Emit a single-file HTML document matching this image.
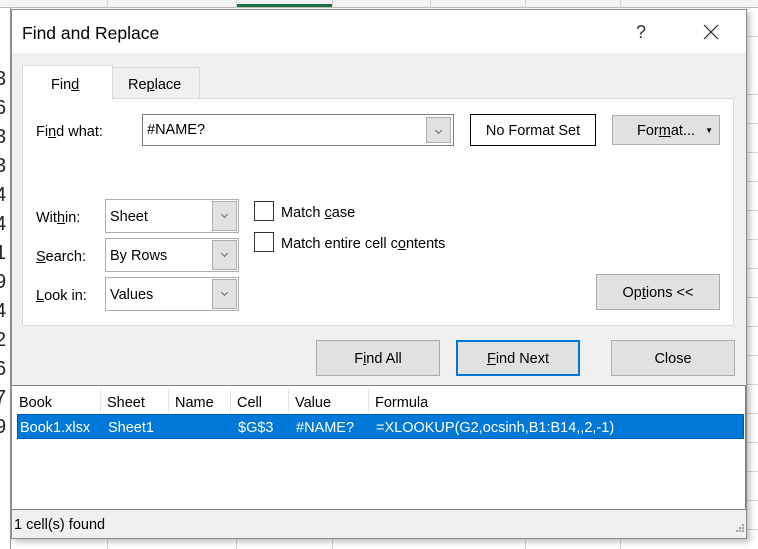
<!DOCTYPE html>
<html><head><meta charset="utf-8"><style>
*{margin:0;padding:0;box-sizing:border-box}
body{width:758px;height:549px;overflow:hidden;background:#fff;font-family:"Liberation Sans",sans-serif;font-size:14.5px;color:#000;position:relative}
.a{position:absolute;white-space:nowrap}
.hl{position:absolute;height:1px;background:#d4d4d4}
.vl{position:absolute;width:1px;background:#d4d4d4}
.num{position:absolute;left:-5px;font-size:20px;color:#222;width:14px}
.btn{position:absolute;background:#e1e1e1;border:1px solid #adadad;text-align:center}
.cb{position:absolute;background:#fff;border:1px solid #7a7a7a}
.dd{position:absolute;top:1px;bottom:1px;right:1px;width:25px;background:#e1e1e1;border:1px solid #adadad}
.dd:after{content:"";position:absolute;left:9px;top:10px;width:4px;height:4px;border-right:1px solid #666;border-bottom:1px solid #666;transform:rotate(45deg)}
.chk{position:absolute;width:20px;height:20px;border:1px solid #333;background:#fff}
u{text-decoration:underline}
</style></head><body>
<div class="a" style="left:0;top:0;width:758px;height:8px;background:#f3f3f3;border-bottom:1px solid #bbb"></div>
<div class="a" style="left:236px;top:4px;width:96px;height:3px;background:#217346"></div>
<div class="vl" style="left:107px;top:0;height:8px"></div><div class="vl" style="left:236px;top:0;height:8px"></div><div class="vl" style="left:332px;top:0;height:8px"></div><div class="vl" style="left:430px;top:0;height:8px"></div><div class="vl" style="left:525px;top:0;height:8px"></div><div class="vl" style="left:620px;top:0;height:8px"></div>
<div class="vl" style="left:10px;top:8px;height:541px;background:#999"></div>
<div class="vl" style="left:107px;top:538px;height:11px"></div><div class="vl" style="left:236px;top:538px;height:11px"></div><div class="vl" style="left:332px;top:538px;height:11px"></div><div class="vl" style="left:525px;top:538px;height:11px"></div><div class="vl" style="left:620px;top:538px;height:11px"></div>
<div class="hl" style="left:746px;width:12px;top:36px"></div><div class="hl" style="left:746px;width:12px;top:94px"></div><div class="hl" style="left:746px;width:12px;top:123px"></div><div class="hl" style="left:746px;width:12px;top:152px"></div><div class="hl" style="left:746px;width:12px;top:181px"></div><div class="hl" style="left:746px;width:12px;top:210px"></div><div class="hl" style="left:746px;width:12px;top:239px"></div><div class="hl" style="left:746px;width:12px;top:268px"></div><div class="hl" style="left:746px;width:12px;top:297px"></div><div class="hl" style="left:746px;width:12px;top:326px"></div><div class="hl" style="left:746px;width:12px;top:355px"></div><div class="hl" style="left:746px;width:12px;top:384px"></div><div class="hl" style="left:746px;width:12px;top:413px"></div><div class="hl" style="left:746px;width:12px;top:442px"></div><div class="hl" style="left:746px;width:12px;top:471px"></div><div class="hl" style="left:746px;width:12px;top:500px"></div><div class="hl" style="left:746px;width:12px;top:529px"></div>
<div class="num" style="top:68px">3</div><div class="num" style="top:97px">6</div><div class="num" style="top:126px">3</div><div class="num" style="top:155px">3</div><div class="num" style="top:184px">4</div><div class="num" style="top:213px">4</div><div class="num" style="top:242px">1</div><div class="num" style="top:271px">9</div><div class="num" style="top:300px">4</div><div class="num" style="top:329px">2</div><div class="num" style="top:358px">6</div><div class="num" style="top:387px">7</div><div class="num" style="top:416px">9</div>
<div class="a" style="left:11px;top:9px;width:736px;height:530px;background:#f0f0f0;border:1px solid #888;box-shadow:3px 3px 6px rgba(0,0,0,.25)"></div>
<div class="a" style="left:12px;top:10px;width:734px;height:43px;background:#fff"></div>
<div class="a" style="left:22px;top:23px;font-size:17.5px">Find and Replace</div>
<div class="a" style="left:636px;top:22px;font-size:18px;color:#333">?</div>
<svg class="a" style="left:703px;top:24px" width="16" height="16"><path d="M1 1L15 15M15 1L1 15" stroke="#222" stroke-width="1.2"/></svg>
<div class="a" style="left:112px;top:67px;width:88px;height:32px;background:#f0f0f0;border:1px solid #d9d9d9;border-bottom:none"></div>
<div class="a" style="left:128px;top:77px">Re<u>p</u>lace</div>
<div class="a" style="left:22px;top:98px;width:712px;height:228px;background:#fff;border:1px solid #d9d9d9"></div>
<div class="a" style="left:22px;top:65px;width:91px;height:35px;background:#fff;border:1px solid #d9d9d9;border-bottom:none"></div>
<div class="a" style="left:51px;top:77px">Fin<u>d</u></div>
<div class="a" style="left:36px;top:124px">Fi<u>n</u>d what:</div>
<div class="cb" style="left:142px;top:114px;width:312px;height:32px"><div class="a" style="left:4px;top:7px">#NAME?</div><div class="dd" style="top:2px;bottom:2px;right:2px"></div></div>
<div class="a" style="left:470px;top:114px;width:126px;height:32px;border:1px solid #000;background:#fff;text-align:center;line-height:32px">No Format Set</div>
<div class="btn" style="left:612px;top:115px;width:108px;height:30px;line-height:30px;text-align:left;padding-left:24px">For<u>m</u>at...<span style="position:absolute;right:6px;top:0;font-size:8px">▼</span></div>
<div class="a" style="left:36px;top:210px">Wit<u>h</u>in:</div>
<div class="cb" style="left:105px;top:199px;width:134px;height:34px;border-color:#adadad"><div class="a" style="left:4px;top:9px">Sheet</div><div class="dd"></div></div>
<div class="a" style="left:36px;top:249px"><u>S</u>earch:</div>
<div class="cb" style="left:105px;top:238px;width:134px;height:34px;border-color:#adadad"><div class="a" style="left:4px;top:9px">By Rows</div><div class="dd"></div></div>
<div class="a" style="left:36px;top:288px"><u>L</u>ook in:</div>
<div class="cb" style="left:105px;top:277px;width:134px;height:34px;border-color:#adadad"><div class="a" style="left:4px;top:9px">Values</div><div class="dd"></div></div>
<div class="chk" style="left:254px;top:201px"></div><div class="a" style="left:281px;top:205px">Match <u>c</u>ase</div>
<div class="chk" style="left:254px;top:232px"></div><div class="a" style="left:281px;top:236px">Match entire cell c<u>o</u>ntents</div>
<div class="btn" style="left:596px;top:274px;width:124px;height:36px;line-height:36px">Op<u>t</u>ions &lt;&lt;</div>
<div class="btn" style="left:316px;top:340px;width:124px;height:36px;line-height:36px">F<u>i</u>nd All</div>
<div class="btn" style="left:456px;top:340px;width:124px;height:36px;line-height:34px;border:2px solid #0078d7"><u>F</u>ind Next</div>
<div class="btn" style="left:611px;top:340px;width:124px;height:36px;line-height:36px">Close</div>
<div class="a" style="left:12px;top:385px;width:734px;height:125px;background:#fff;border-top:1px solid #828282;border-right:1px solid #828282;border-bottom:1px solid #828282"></div>
<div class="vl" style="left:100px;top:388px;height:25px;background:#e5e5e5"></div><div class="vl" style="left:168px;top:388px;height:25px;background:#e5e5e5"></div><div class="vl" style="left:230px;top:388px;height:25px;background:#e5e5e5"></div><div class="vl" style="left:288px;top:388px;height:25px;background:#e5e5e5"></div><div class="vl" style="left:368px;top:388px;height:25px;background:#e5e5e5"></div>
<div class="a" style="left:19px;top:395px">Book</div><div class="a" style="left:107px;top:395px">Sheet</div><div class="a" style="left:175px;top:395px">Name</div><div class="a" style="left:237px;top:395px">Cell</div><div class="a" style="left:295px;top:395px">Value</div><div class="a" style="left:375px;top:395px">Formula</div>
<div class="a" style="left:17px;top:414px;width:727px;height:25px;background:#0078d7;border:1px dotted #003a70;color:#fff">
<span class="a" style="left:2px;top:5px">Book1.xlsx</span><span class="a" style="left:90px;top:5px">Sheet1</span><span class="a" style="left:220px;top:5px">$G$3</span><span class="a" style="left:278px;top:5px">#NAME?</span><span class="a" style="left:358px;top:5px">=XLOOKUP(G2,ocsinh,B1:B14,,2,-1)</span></div>
<div class="a" style="left:14px;top:517px">1 cell(s) found</div>
<svg class="a" style="left:734px;top:523px" width="11" height="12"><g fill="#a0a0a0"><rect x="8" y="1" width="2" height="2"/><rect x="5" y="4" width="2" height="2"/><rect x="8" y="4" width="2" height="2"/><rect x="2" y="7" width="2" height="2"/><rect x="5" y="7" width="2" height="2"/><rect x="8" y="7" width="2" height="2"/></g></svg>
</body></html>
